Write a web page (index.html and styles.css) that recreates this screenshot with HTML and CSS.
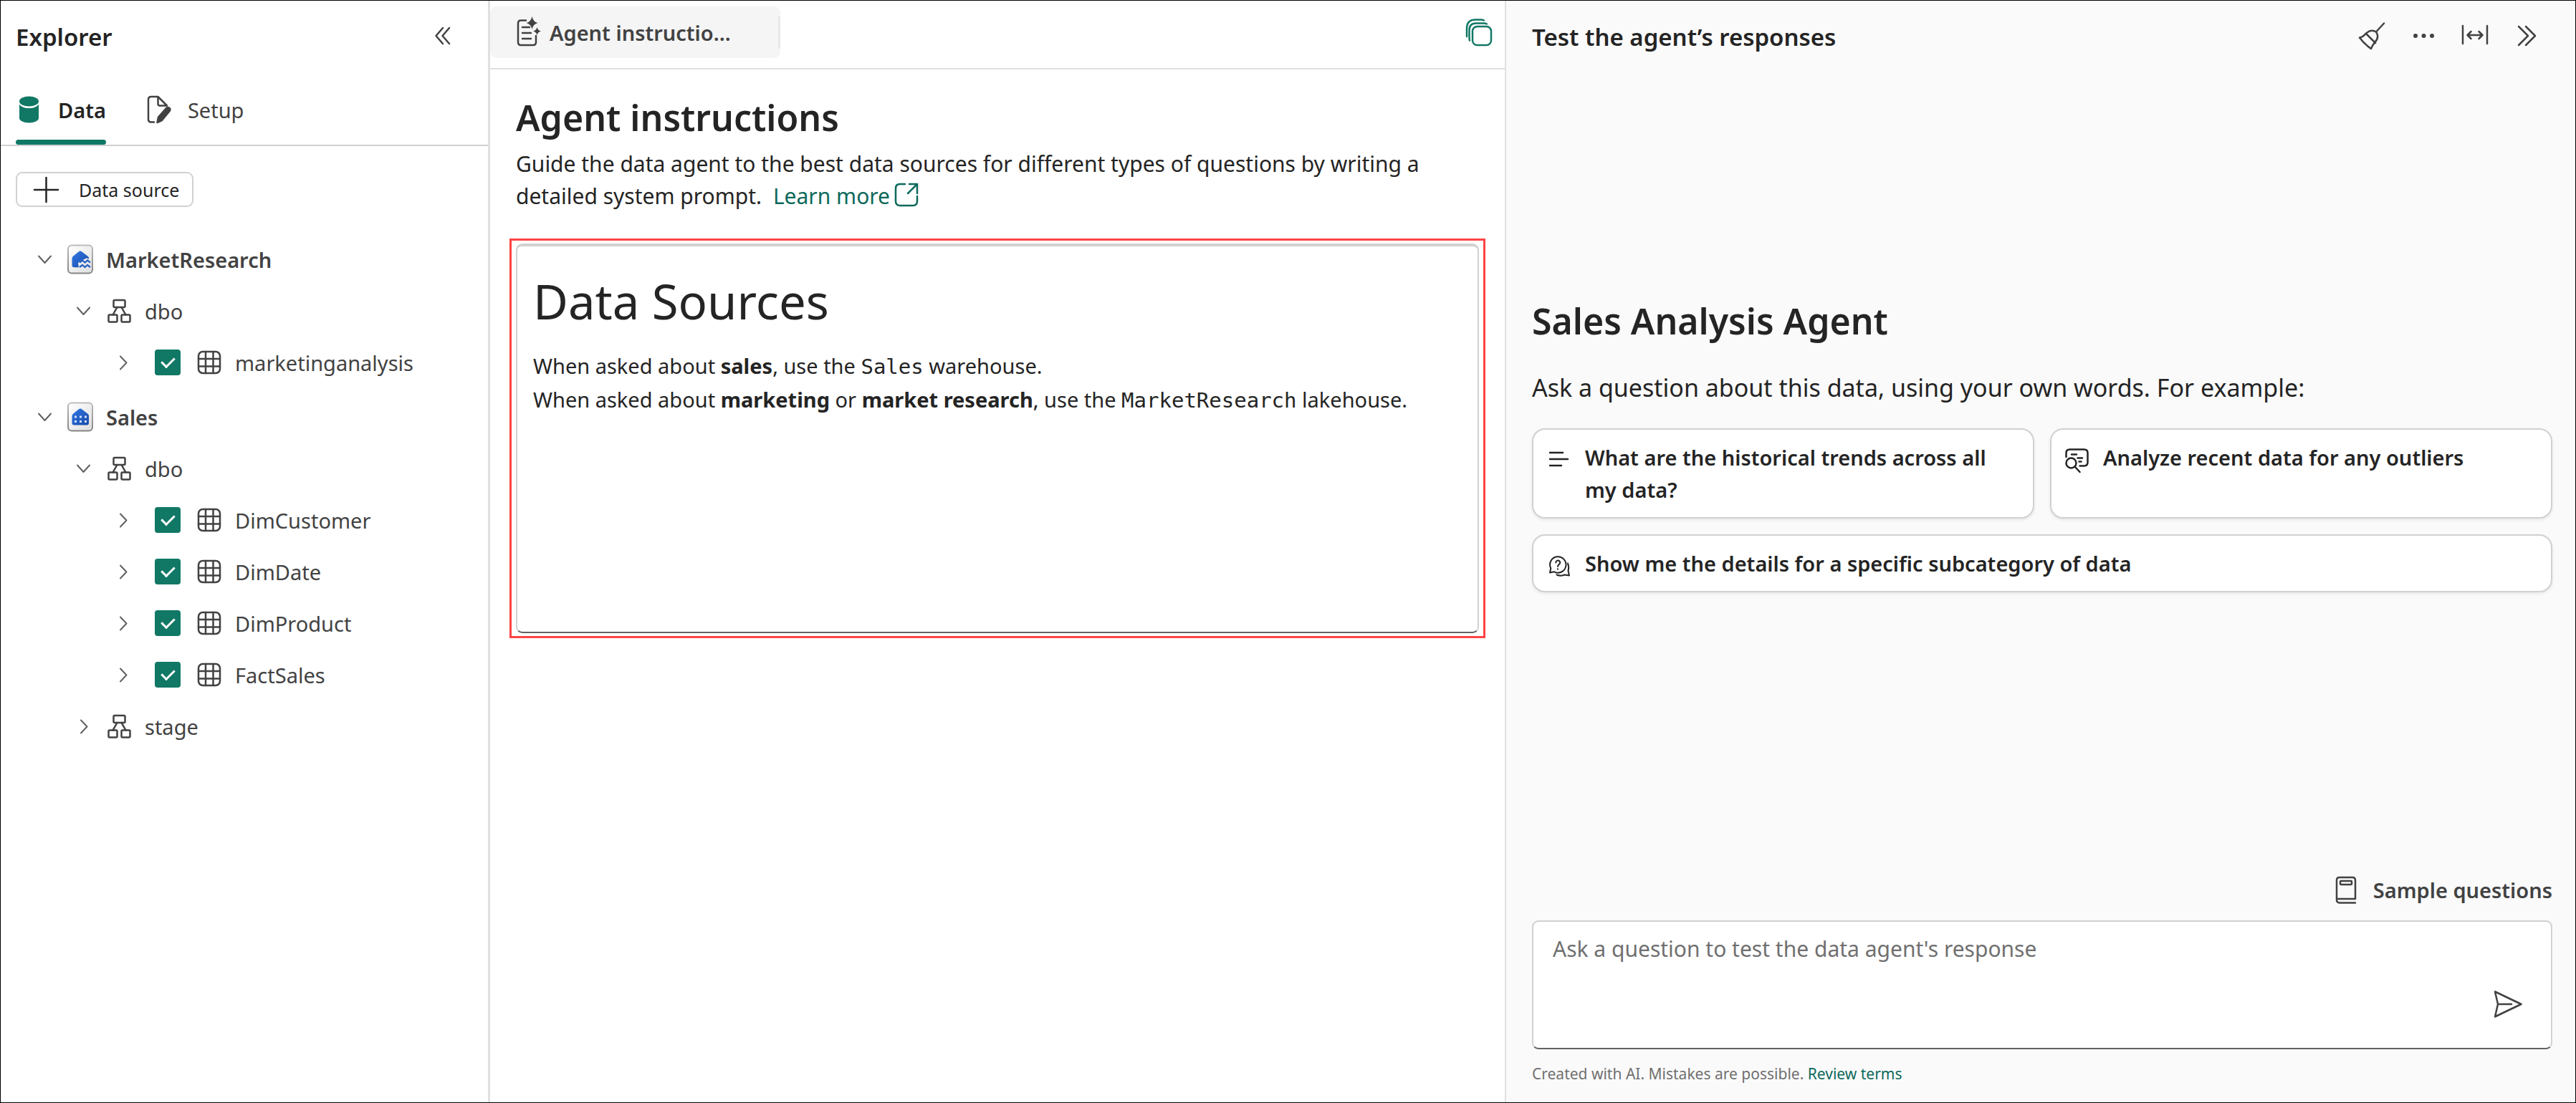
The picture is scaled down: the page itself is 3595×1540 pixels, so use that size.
FILE: index.html
```html
<!DOCTYPE html>
<html lang="en">
<head>
<meta charset="utf-8">
<title>Sales Analysis Agent</title>
<link rel="stylesheet" href="styles.css">
</head>
<body>
<svg class="sprite" aria-hidden="true">
  <defs>
    <linearGradient id="card-fill" x1="0" y1="0" x2="1" y2="1"><stop offset="0" stop-color="#fff"/><stop offset="1" stop-color="#dedede"/></linearGradient>
    <linearGradient id="card-edge" x1="0" y1="0" x2="0" y2="1"><stop offset="0" stop-color="#bdbdbd"/><stop offset="1" stop-color="#858585"/></linearGradient>
    <linearGradient id="house-fill" x1="0" y1="0" x2="1" y2="1"><stop offset="0" stop-color="#2f77e6"/><stop offset="1" stop-color="#1b4aa6"/></linearGradient>
  </defs>
  <symbol id="chevron-down" viewBox="0 0 27 27"><path d="M5 8.500l8.500 9.500 8.500-9.500"/></symbol>
  <symbol id="chevron-right" viewBox="0 0 27 27"><path d="M10 4.500l8.500 9-8.500 9"/></symbol>
  <symbol id="schema" viewBox="0 0 36 36"><rect x="10.500" y="3" width="16" height="10" rx="1.500"/><rect x="3.500" y="23.500" width="12" height="10" rx="1.500"/><rect x="21.500" y="23.500" width="12" height="10" rx="1.500"/><path d="M15.500 13l-6 10.500M21.500 13l6 10.500"/></symbol>
  <symbol id="table" viewBox="0 0 36 36"><rect x="3" y="3" width="30" height="30" rx="6"/><path d="M13 3v30M23.500 3v30M3 13h30M3 23.500h30"/></symbol>
  <symbol id="lakehouse" viewBox="0 0 36 42"><rect x="1" y="1.500" width="34" height="39" rx="5" fill="url(#card-fill)" stroke="url(#card-edge)" stroke-width="2"/><path d="M18 9.500q1 0 2 .800l8.500 6.500q1.500 1.200 1.500 3v1l-3-1.500-4 2-5 2-3 3 1 6H9.500q-3 0-3-3V20q0-2 1.500-3.200l8-6.500q1-.800 2-.800z" fill="url(#house-fill)"/><path d="M17 25.500l4-3 3.500 3 3.500-3 4 3M17 32l4-3 3.500 3 3.500-3 4 3" fill="none" stroke="#2560c4" stroke-width="2.200"/></symbol>
  <symbol id="warehouse" viewBox="0 0 36 42"><rect x="1" y="1.500" width="34" height="39" rx="5" fill="url(#card-fill)" stroke="url(#card-edge)" stroke-width="2"/><path d="M18 9.500q1 0 2 .800l8.500 6.500q1.500 1.200 1.500 3V29.500q0 3-3 3H9.500q-3 0-3-3V20q0-2 1.500-3.200l8-6.500q1-.800 2-.800z" fill="url(#house-fill)"/><path d="M10 19.500h3v3h-3zM17 19.500h3v3h-3zM24 19.500h3v3h-3zM10 26h3v3h-3zM17 26h3v3h-3zM24 26h3v3h-3z" fill="#cfe0fb"/></symbol>
</svg>

<aside class="explorer">
  <header class="panel-header">
    <h2 class="panel-title">Explorer</h2>
    <button class="icon-button" type="button" aria-label="Collapse explorer"><svg class="icon" viewBox="0 0 36 36"><path d="M18 6L8.500 17l9.500 11M27 6l-9.500 11L27 28"/></svg></button>
  </header>
  <div class="tabs" role="tablist">
    <button class="tab tab-active" type="button" role="tab" aria-selected="true"><svg class="icon-tall" viewBox="0 0 36 40"><ellipse cx="18.500" cy="8.500" rx="13.500" ry="7"/><path d="M5 12.500C7 16 12 18 18.500 18S30 16 32 12.500V32c0 3.500-6 6.500-13.500 6.500S5 35.500 5 32z"/></svg>Data</button>
    <button class="tab" type="button" role="tab" aria-selected="false"><svg class="icon-tall icon" viewBox="0 0 36 40"><path d="M12 37.500H8q-4 0-4-4V6q0-4 4-4h9.500L30 14.500H20q-2.500 0-2.500-2.500V2"/><path d="M16.500 38l1.500-7.500 11-12.500q2-1.800 4.200-.200 2.200 1.900.500 4.200L23 35z" fill="#424242" stroke-linejoin="round"/></svg>Setup</button>
  </div>
  <button class="add-source" type="button"><svg class="icon icon-dark" viewBox="0 0 36 36"><path d="M18.500 0v34M2 17h33"/></svg>Data source</button>

  <ul class="tree">
    <li>
      <div class="row row-root"><button class="twisty" type="button" aria-label="Collapse MarketResearch"><svg class="icon"><use href="#chevron-down"/></svg></button><svg class="item-icon"><use href="#lakehouse"/></svg><span>MarketResearch</span></div>
      <ul>
        <li>
          <div class="row row-schema"><button class="twisty" type="button" aria-label="Collapse dbo"><svg class="icon"><use href="#chevron-down"/></svg></button><svg class="icon"><use href="#schema"/></svg><span>dbo</span></div>
          <ul>
            <li class="row row-table"><button class="twisty" type="button" aria-label="Expand marketinganalysis"><svg class="icon"><use href="#chevron-right"/></svg></button><input class="check" type="checkbox" id="t-marketinganalysis" checked><svg class="icon"><use href="#table"/></svg><label for="t-marketinganalysis">marketinganalysis</label></li>
          </ul>
        </li>
      </ul>
    </li>
    <li>
      <div class="row row-root"><button class="twisty" type="button" aria-label="Collapse Sales"><svg class="icon"><use href="#chevron-down"/></svg></button><svg class="item-icon"><use href="#warehouse"/></svg><span>Sales</span></div>
      <ul>
        <li>
          <div class="row row-schema"><button class="twisty" type="button" aria-label="Collapse dbo"><svg class="icon"><use href="#chevron-down"/></svg></button><svg class="icon"><use href="#schema"/></svg><span>dbo</span></div>
          <ul>
            <li class="row row-table"><button class="twisty" type="button" aria-label="Expand DimCustomer"><svg class="icon"><use href="#chevron-right"/></svg></button><input class="check" type="checkbox" id="t-dimcustomer" checked><svg class="icon"><use href="#table"/></svg><label for="t-dimcustomer">DimCustomer</label></li>
            <li class="row row-table"><button class="twisty" type="button" aria-label="Expand DimDate"><svg class="icon"><use href="#chevron-right"/></svg></button><input class="check" type="checkbox" id="t-dimdate" checked><svg class="icon"><use href="#table"/></svg><label for="t-dimdate">DimDate</label></li>
            <li class="row row-table"><button class="twisty" type="button" aria-label="Expand DimProduct"><svg class="icon"><use href="#chevron-right"/></svg></button><input class="check" type="checkbox" id="t-dimproduct" checked><svg class="icon"><use href="#table"/></svg><label for="t-dimproduct">DimProduct</label></li>
            <li class="row row-table"><button class="twisty" type="button" aria-label="Expand FactSales"><svg class="icon"><use href="#chevron-right"/></svg></button><input class="check" type="checkbox" id="t-factsales" checked><svg class="icon"><use href="#table"/></svg><label for="t-factsales">FactSales</label></li>
          </ul>
        </li>
        <li>
          <div class="row row-schema"><button class="twisty" type="button" aria-label="Expand stage"><svg class="icon"><use href="#chevron-right"/></svg></button><svg class="icon"><use href="#schema"/></svg><span>stage</span></div>
        </li>
      </ul>
    </li>
  </ul>
</aside>

<main class="workspace">
  <div class="doc-bar">
    <button class="doc-tab" type="button"><svg class="icon-tall icon" viewBox="0 0 36 40"><path d="M14 3.500H7q-4 0-4 4V34q0 4 4 4h17q4 0 4-4V25M9 13h10M9 21h12M9 29h12"/><path d="M22.500-2q1.500 7.500 8 9-6.500 1.500-8 9-1.500-7.500-8-9 6.500-1.500 8-9zM29.500 13q1 4.500 5.500 5.500-4.500 1-5.500 5.500-1-4.500-5.500-5.500 4.500-1 5.500-5.500z" fill="#424242" stroke="none"/></svg>Agent instructio...</button>
    <button class="icon-button" type="button" aria-label="Copy"><svg class="icon-tall icon icon-brand" viewBox="0 0 36 40"><rect x="9" y="12" width="26" height="26" rx="6.500"/><path d="M5 31.500q-.500-1.500-.500-4V17q0-9.500 9.500-9.500h11q2 0 4 1M1 26V15Q1 2.500 13 2.500h8q2 0 4 1"/></svg></button>
  </div>
  <section class="instructions">
    <h1 class="title">Agent instructions</h1>
    <p class="intro">Guide the data agent to the best data sources for different types of questions by writing a detailed system prompt. <a class="link learn-more" href="#">Learn more<svg class="icon link-icon" viewBox="0 0 36 36"><path d="M16 3H9Q3 3 3 9v18q0 6 6 6h18q6 0 6-6v-7M22 3h11v13M33 3L20 16"/></svg></a></p>
    <div class="highlight">
      <div class="editor" contenteditable="true" role="textbox" aria-multiline="true" aria-label="Agent instructions" spellcheck="false">
        <h1 class="editor-title">Data Sources</h1>
        <p>When asked about <strong>sales</strong>, use the <code>Sales</code> warehouse.<br>When asked about <strong>marketing</strong> or <strong>market research</strong>, use the <code>MarketResearch</code> lakehouse.</p>
      </div>
    </div>
  </section>
</main>

<aside class="chat">
  <header class="panel-header">
    <h2 class="panel-title">Test the agent’s responses</h2>
    <div class="actions">
      <button class="icon-button" type="button" aria-label="Clear chat"><svg class="icon" viewBox="0 0 36 36"><path d="M35-0.500L24.500 11M17 35Q7 28 1 19.500q5-1 8.500-5.500Q17 7 24 11.500q5 7-1.500 14.500Q19 29.500 17 35zM10 14l13 13"/></svg></button>
      <button class="icon-button" type="button" aria-label="More options"><svg class="icon-solid" viewBox="0 0 36 36"><circle cx="7" cy="17" r="3"/><circle cx="18.500" cy="17" r="3"/><circle cx="30" cy="17" r="3"/></svg></button>
      <button class="icon-button" type="button" aria-label="Widen panel"><svg class="icon" viewBox="0 0 36 36"><path d="M1 3v25M35 3v25M8 16h20M12.500 11L7.500 16l5 5M23.500 11l5 5-5 5"/></svg></button>
      <button class="icon-button" type="button" aria-label="Collapse panel"><svg class="icon" viewBox="0 0 36 36"><path d="M7 4l13 13L7 30M17 4l13 13-13 13"/></svg></button>
    </div>
  </header>
  <div class="welcome">
    <h1 class="title">Sales Analysis Agent</h1>
    <p class="lead">Ask a question about this data, using your own words. For example:</p>
    <div class="prompts">
      <button class="prompt" type="button"><svg class="icon icon-dark" viewBox="0 0 36 36"><path d="M5 8h18M5 17h25M5 26h16"/></svg><span>What are the historical trends across all my data?</span></button>
      <button class="prompt" type="button"><svg class="icon icon-dark" viewBox="0 0 36 36"><path d="M2.500 14V8.500q0-5 5-5h20q5 0 5 5v13q0 5-5 5h-6M10 10.500h7M18.500 15.500h6.500M20.500 20.500h3M15 28l6.500 7"/><circle cx="9.500" cy="22.500" r="7"/></svg><span>Analyze recent data for any outliers</span></button>
      <button class="prompt prompt-wide" type="button"><svg class="icon icon-dark icon-fine" viewBox="0 0 36 36"><path d="M5 27.500L6.300 21.500A11.200 11.200 0 1 1 11 26.300zM30 14.500q2 5 .500 10.500l1.500 6.500-6.500-1q-6 2.500-11 0M13.200 13.500a3 3 0 1 1 5 2.200q-2.200 1.500-2.200 3.300M16 22.300v.4"/></svg><span>Show me the details for a specific subcategory of data</span></button>
    </div>
  </div>
  <div class="composer">
    <button class="sample" type="button"><svg class="icon-tall icon" viewBox="0 0 36 40"><path d="M9 37.500q-4-.500-4-4V6q0-4 4-4h18q4 0 4 4v26H5M9 37.500h22"/><rect x="10" y="7" width="16" height="5" rx="1"/></svg>Sample questions</button>
    <div class="question-box">
      <textarea class="question" aria-label="Question" placeholder="Ask a question to test the data agent's response"></textarea>
      <button class="icon-button send" type="button" aria-label="Send"><svg class="icon" viewBox="0 0 40 40"><path d="M2 2.500L38.500 20 2 37.500 6 20zM6 20h19"/></svg></button>
    </div>
    <p class="disclaimer">Created with AI. Mistakes are possible. <a class="link" href="#">Review terms</a></p>
  </div>
</aside>
</body>
</html>
```
FILE: styles.css
```css
* { box-sizing: border-box; }

body {
  display: grid;
  grid-template-columns: minmax(0, 683fr) minmax(0, 1416fr) minmax(0, 1494fr);
  min-height: 100vh;
  margin: 0;
  border: 1px solid #000;
  background: #fff;
  color: #242424;
  font-family: "Noto Sans", "Open Sans", sans-serif;
  font-size: 29px;
  line-height: 45px;
}

h1, h2, p, ul { margin: 0; padding: 0; }
ul { list-style: none; }

button {
  padding: 0;
  border: 0;
  background: none;
  color: inherit;
  font: inherit;
  text-align: left;
  cursor: pointer;
}

svg { flex: none; width: 36px; height: 36px; overflow: visible; }
.sprite { position: absolute; width: 0; height: 0; }

.icon {
  fill: none;
  stroke: #424242;
  stroke-width: 2.5px;
  stroke-linecap: round;
  stroke-linejoin: round;
}
.icon-tall { height: 40px; }
.icon-dark { stroke: #242424; }
.icon-fine { stroke-width: 2px; }
.icon-brand { stroke: #117865; }
.icon-solid { fill: #424242; }
.icon-button { display: flex; }

.link { color: #0c695a; text-decoration: none; }

.panel-header {
  display: flex;
  align-items: center;
  justify-content: space-between;
  height: 100px;
}
.panel-title { font-size: 33px; font-weight: 600; }

/* Explorer */
.explorer { border-right: 3px solid #e0e0e0; }
.explorer .panel-header { padding: 0 45px 0 21px; }

.tabs {
  display: flex;
  gap: 55px;
  height: 103px;
  padding: 0 21px;
  border-bottom: 2px solid #d1d1d1;
}
.tab {
  position: relative;
  display: flex;
  align-items: center;
  gap: 23px;
  padding-top: 3px;
  color: #424242;
}
.tab-active { color: #242424; font-weight: 600; }
.tab-active svg { fill: #117865; }
.tab-active::after {
  content: "";
  position: absolute;
  right: 0;
  bottom: 0;
  left: 0;
  height: 7px;
  border-radius: 4px;
  background: #117865;
}

.add-source {
  display: flex;
  align-items: center;
  gap: 28px;
  height: 49px;
  margin: 36px 21px;
  padding: 2px 18px 0 22px;
  border: 2px solid #d1d1d1;
  border-radius: 9px;
  font-size: 25px;
}

.tree { display: grid; gap: 4px; color: #424242; }
.row {
  display: flex;
  align-items: center;
  gap: 18px;
  height: 72px;
  padding-top: 2px;
}
.row-root { padding-left: 48px; font-weight: 600; }
.row-schema { padding-left: 102px; }
.row-table { padding-left: 157px; }
.twisty { display: flex; }
.twisty svg { width: 27px; height: 27px; stroke: #616161; stroke-width: 2px; }
.item-icon { height: 42px; }

.check {
  appearance: none;
  display: grid;
  place-items: center;
  width: 36px;
  height: 36px;
  margin: 0 4px 0 13px;
  border-radius: 4px;
  background: #117865;
}
.check::before {
  content: "";
  width: 8px;
  height: 15px;
  margin-bottom: 5px;
  border: solid #fff;
  border-width: 0 3px 3px 0;
  transform: rotate(45deg);
}

/* Instructions */
.doc-bar {
  display: flex;
  align-items: center;
  justify-content: space-between;
  height: 96px;
  padding: 8px 18px 14px 0;
  border-bottom: 2px solid #e0e0e0;
}
.doc-tab {
  display: flex;
  align-items: center;
  gap: 11px;
  width: 405px;
  height: 72px;
  padding-left: 36px;
  border-radius: 9px;
  background: linear-gradient(#e8e8e8, #e8e8e8) right center / 3px 45px no-repeat #f5f5f5;
  color: #424242;
  font-weight: 600;
}

.instructions { padding: 31px 36px; }
.title { font-size: 50px; font-weight: 600; line-height: 72px; }
.intro { margin-top: 6px; padding-right: 72px; font-size: 30px; }
.learn-more { margin-left: 8px; }
.link-icon { margin-left: 5px; stroke: #0c695a; vertical-align: -5px; }

.highlight {
  margin: 37px -9px 0;
  padding: 4px 6px;
  border: 3px solid #ff4343;
}
.editor {
  min-height: 544px;
  padding: 28px 22px;
  border: 2px solid #d1d1d1;
  border-top-width: 4px;
  border-bottom-color: #616161;
  border-radius: 9px;
  line-height: 47px;
}
.editor-title { margin-bottom: 19px; font-size: 67px; font-weight: 400; line-height: 96px; }
code { font-family: "DejaVu Sans Mono", monospace; font-size: 29px; line-height: 1; }

/* Chat */
.chat {
  display: flex;
  flex-direction: column;
  padding: 0 32px 24px 36px;
  border-left: 2px solid #e0e0e0;
  background: #fafafa;
}
.actions { display: flex; gap: 36px; margin-right: 18px; }

.welcome {
  display: flex;
  flex: 1;
  flex-direction: column;
  justify-content: center;
  padding-bottom: 82px;
}
.lead { margin: 32px 0; font-size: 34px; line-height: 50px; }

.prompts {
  display: grid;
  grid-template-columns: repeat(2, minmax(0, 1fr));
  gap: 22px;
}
.prompt {
  display: flex;
  align-items: flex-start;
  gap: 18px;
  padding: 16px 18px;
  border: 2px solid #d1d1d1;
  border-radius: 18px;
  background: #fff;
  box-shadow: 0 2px 4px rgba(0, 0, 0, .08);
  font-weight: 600;
}
.prompt svg { margin-top: 8px; }
.prompt-wide { grid-column: 1 / -1; }

.composer { display: flex; flex-direction: column; }
.sample {
  display: flex;
  align-items: center;
  align-self: flex-end;
  gap: 20px;
  color: #424242;
  font-weight: 600;
}
.question-box {
  display: flex;
  align-items: flex-end;
  height: 180px;
  margin: 20px 0 18px;
  border: 2px solid #d1d1d1;
  border-bottom-color: #616161;
  border-radius: 9px;
  background: #fff;
}
.question {
  flex: 1;
  align-self: stretch;
  padding: 15px 27px;
  border: 0;
  outline: 0;
  background: none;
  color: #242424;
  font: inherit;
  font-size: 30px;
  resize: none;
}
.question::placeholder { color: #707070; }
.send { padding: 0 40px 41px 0; }
.send svg { width: 40px; height: 40px; }
.disclaimer { color: #707070; font-size: 21px; line-height: 32px; }
```
